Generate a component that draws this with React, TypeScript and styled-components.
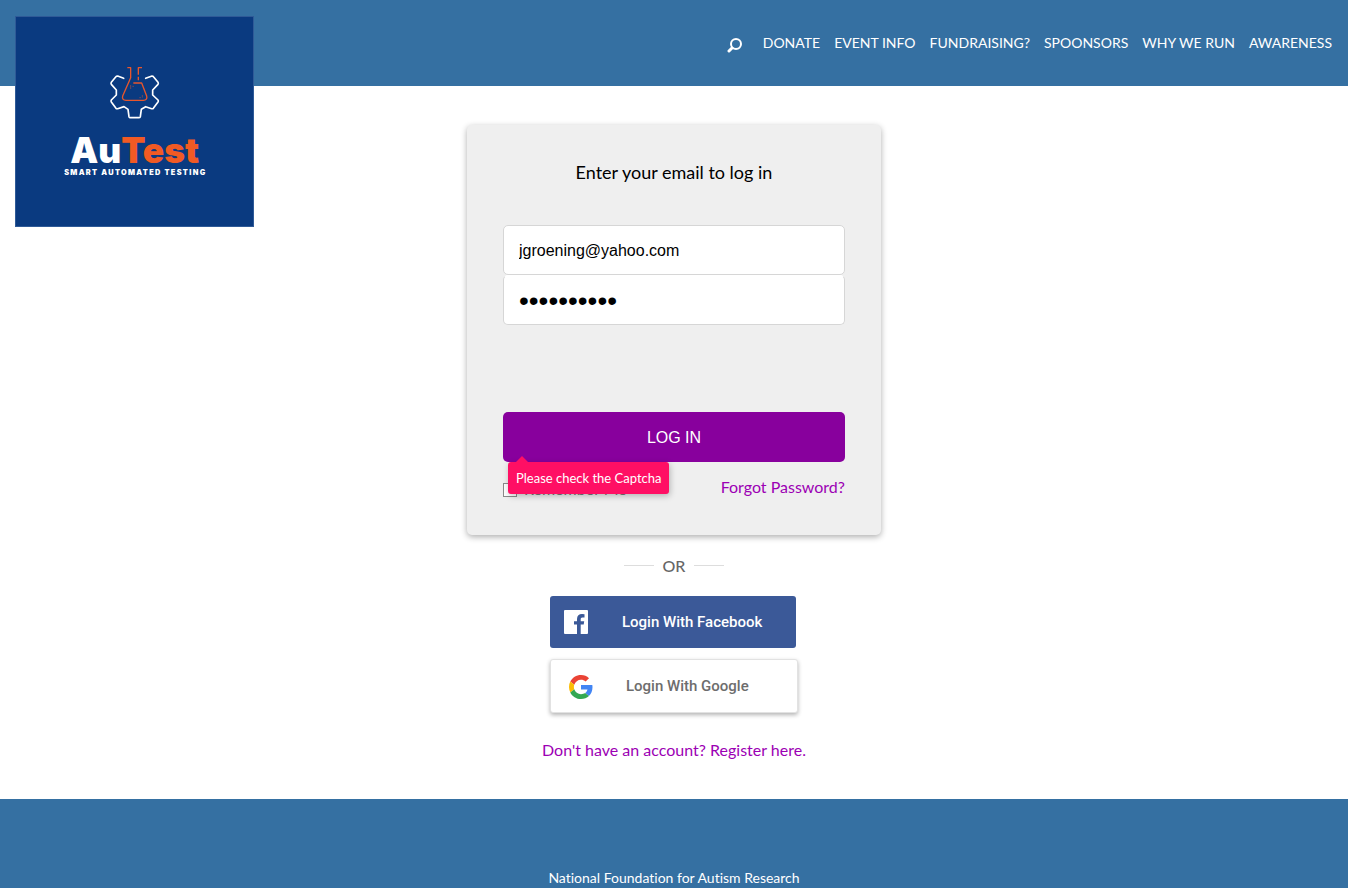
import React from "react";
import styled, { createGlobalStyle } from "styled-components";

const GlobalStyle = createGlobalStyle`
  *, *::before, *::after { box-sizing: border-box; }
  body {
    margin: 0;
    background: #fff;
    color: #000;
    font-family: Lato, "Liberation Sans", sans-serif;
    font-size: 16px;
    font-variant-ligatures: none;
  }
`;

const Page = styled.div`
  display: flex;
  flex-direction: column;
  min-height: 100vh;
  padding-right: 12px;
`;

const Header = styled.header`
  display: flex;
  justify-content: space-between;
  align-items: flex-start;
  height: 86px;
  padding: 16px 16px 0 15px;
  background: #3570a2;
`;

const LogoLink = styled.a`
  display: block;
  flex: none;
  width: 239px;
  height: 211px;
  background: #0a3a80;
  border: 1px solid #2f5a97;
`;

const LogoArt = styled.svg`
  display: block;
  width: 100%;
  height: 100%;
`;

const Nav = styled.nav`
  display: flex;
  align-items: center;
  gap: 14px;
  padding-top: 17px;
`;

const NavLink = styled.a`
  color: #fff;
  font-size: 14px;
  line-height: 20px;
  text-decoration: none;
  text-transform: uppercase;
`;

const SearchButton = styled.button`
  display: flex;
  margin: 0 6px 0 0;
  padding: 3px 0 0;
  border: 0;
  background: none;
  color: #fff;
  cursor: pointer;
`;

const Main = styled.main`
  display: flex;
  flex: 1;
  flex-direction: column;
  align-items: center;
  padding: 39px 16px 37px;
`;

const Card = styled.form`
  width: 414px;
  max-width: 100%;
  padding: 36px;
  border-radius: 5px;
  background: #efefef;
  box-shadow: 0 2px 6px rgba(0, 0, 0, 0.32);
`;

const Title = styled.h1`
  margin: 0 0 42px;
  font-size: 18px;
  font-weight: 400;
  line-height: 22px;
  text-align: center;
`;

const Field = styled.input`
  display: block;
  width: 100%;
  height: 50px;
  padding: 2px 15px 0;
  border: 1px solid #d6d6d6;
  border-radius: 5px;
  outline: 0;
  background: #fff;
  color: #000;
  font: 16px "Liberation Sans", Arial, sans-serif;

  & + & { border-top-color: #fff; }

  &[type="password"] { font-size: 28px; }
`;

const Submit = styled.button`
  display: block;
  width: 100%;
  height: 50px;
  padding: 2px 0 0;
  border: 0;
  border-radius: 5px;
  background: #88009d;
  color: #fff;
  font: 16px "Liberation Sans", Arial, sans-serif;
  cursor: pointer;
`;

const SubmitArea = styled.div`
  position: relative;
  margin-top: 87px;
`;

const Tooltip = styled.div`
  position: absolute;
  top: 100%;
  left: 5px;
  padding: 6px 8px;
  border-radius: 3px;
  background: #ff0f64;
  box-shadow: 1px 2px 6px rgba(0, 0, 0, 0.25);
  color: #fff;
  font-size: 13px;
  line-height: 20px;
  white-space: nowrap;

  &::before {
    content: "";
    position: absolute;
    bottom: 100%;
    left: 8px;
    border: 6px solid transparent;
    border-top-width: 0;
    border-bottom-color: #ff0f64;
  }
`;

const Options = styled.div`
  display: flex;
  justify-content: space-between;
  margin-top: 13px;
`;

const Remember = styled.label`
  display: flex;
  align-items: flex-end;
  gap: 7px;
  padding-bottom: 1px;
  color: #777;
  line-height: 18px;
`;

const Checkbox = styled.input`
  appearance: none;
  width: 14px;
  height: 14px;
  margin: 0 0 1px;
  border: 1px solid #8a8a8a;
  background: #fff;

  &:checked { background: #88009d; }
`;

const TextLink = styled.a`
  color: #9c00b4;
  line-height: 24px;
  text-decoration: none;
`;

const Divider = styled.div`
  display: flex;
  align-items: center;
  gap: 9px;
  margin: 20px 0;
  color: #666;
  font-weight: 500;
  line-height: 21px;

  &::before, &::after {
    content: "";
    width: 30px;
    height: 1px;
    background: #ddd;
  }
`;

const Social = styled.div`
  display: flex;
  flex-direction: column;
  gap: 11px;
  width: 248px;
  margin-bottom: 25px;
`;

const SocialButton = styled.button<{ $google?: boolean }>`
  display: flex;
  align-items: center;
  gap: ${(p) => (p.$google ? 33 : 34)}px;
  width: ${(p) => (p.$google ? 248 : 246)}px;
  height: ${(p) => (p.$google ? 54 : 52)}px;
  padding: 0 ${(p) => (p.$google ? 18 : 14)}px;
  border: ${(p) => (p.$google ? "1px solid #e2e2e2" : "0")};
  border-radius: 3px;
  background: ${(p) => (p.$google ? "#fff" : "#3b5998")};
  box-shadow: ${(p) => (p.$google ? "0 2px 4px rgba(0, 0, 0, 0.3)" : "none")};
  color: ${(p) => (p.$google ? "#6d6d6d" : "#fff")};
  font: 500 15px/20px Roboto, sans-serif;
  cursor: pointer;

  svg {
    flex: none;
    margin-top: ${(p) => (p.$google ? 2 : 0)}px;
  }
`;

const Footer = styled.footer`
  padding-top: 69px;
  background: #3570a2;
  color: #fff;
  font-size: 14px;
  line-height: 20px;
  text-align: center;
`;

const links = ["Donate", "Event Info", "Fundraising?", "Spoonsors", "Why We Run", "Awareness"];

function Logo() {
  return (
    <LogoArt viewBox="48 51 711 627" role="img" aria-label="AuTest">
      <g fill="none" strokeWidth="5" strokeLinejoin="round" strokeLinecap="round">
        <path
          stroke="#fff"
          d="M371 235 353 228Q349 228 347 231L334 247Q332 250 334 253L349 270V285L334 300Q332 303 334 306L348 325Q350 327 353 326L372 320 384 328 387 350Q388 353 391 353H416Q420 353 421 350L424 328 437 320 455 326Q458 327 460 325L474 306Q476 303 474 300L458 285V270L474 253Q476 250 474 247L461 231Q459 228 456 228L437 235"
        />
        <g stroke="#e8562c" strokeWidth="4" strokeLinecap="butt">
          <path d="M382 203H392V233L368 288Q365 300 378 301H430Q443 300 440 288L425 249H400" />
          <path d="M426 203H415V224M415 230V241" />
          <path d="M392 255V267M397 259H402M418 293H423M427 285V293" strokeWidth="2" opacity="0.7" />
        </g>
      </g>
      <text
        x="404"
        y="488"
        textAnchor="middle"
        fill="#fff"
        fontFamily="Inter, sans-serif"
        fontWeight="900"
        fontSize="106"
      >
        Au<tspan fill="#f15a24">Test</tspan>
      </text>
      <text
        x="406"
        y="526"
        textAnchor="middle"
        fill="#fff"
        fontFamily="Inter, sans-serif"
        fontWeight="900"
        fontSize="22"
        letterSpacing="4"
      >
        SMART AUTOMATED TESTING
      </text>
    </LogoArt>
  );
}

function SearchIcon() {
  return (
    <svg width="16" height="16" viewBox="0 0 16 16" fill="none" stroke="currentColor" aria-hidden="true">
      <circle cx="9" cy="7" r="5" strokeWidth="2" />
      <path d="M5 11 2 14" strokeWidth="3" strokeLinecap="round" />
    </svg>
  );
}

function FacebookIcon() {
  return (
    <svg width="24" height="24" viewBox="0 0 24 24" aria-hidden="true">
      <rect width="24" height="24" rx="1" fill="#fff" />
      <path
        fill="#3b5998"
        d="M13 24V14.500H10V11.300H13V9C13 5.700 15 4 18 4Q19.500 4 20.500 4.200V7.400H18.500C17 7.400 16.700 8.200 16.700 9.300V11.300H20.200L19.700 14.500H16.700V24Z"
      />
    </svg>
  );
}

function GoogleIcon() {
  return (
    <svg width="24" height="24" viewBox="0 0 48 48" aria-hidden="true">
      <path fill="#ea4335" d="M24 9.500c3.540 0 6.710 1.220 9.210 3.600l6.850-6.850C35.900 2.380 30.470 0 24 0 14.620 0 6.510 5.380 2.560 13.220l7.980 6.190C12.430 13.720 17.740 9.500 24 9.500z" />
      <path fill="#4285f4" d="M46.980 24.550c0-1.570-.150-3.090-.380-4.550H24v9.020h12.940c-.580 2.960-2.260 5.480-4.780 7.180l7.730 6c4.510-4.180 7.090-10.360 7.090-17.650z" />
      <path fill="#fbbc05" d="M10.530 28.590c-.480-1.450-.760-2.990-.760-4.590s.270-3.140.760-4.590l-7.980-6.190C.920 16.460 0 20.120 0 24c0 3.880.920 7.540 2.560 10.780l7.970-6.190z" />
      <path fill="#34a853" d="M24 48c6.480 0 11.930-2.130 15.890-5.810l-7.730-6c-2.150 1.450-4.920 2.300-8.160 2.300-6.260 0-11.570-4.220-13.470-9.910l-7.980 6.190C6.510 42.620 14.620 48 24 48z" />
    </svg>
  );
}

export default function App() {
  return (
    <Page>
      <GlobalStyle />
      <Header>
        <LogoLink href="#home">
          <Logo />
        </LogoLink>
        <Nav>
          <SearchButton type="button" aria-label="Search">
            <SearchIcon />
          </SearchButton>
          {links.map((label) => (
            <NavLink key={label} href="#">
              {label}
            </NavLink>
          ))}
        </Nav>
      </Header>

      <Main>
        <Card onSubmit={(e) => e.preventDefault()}>
          <Title>Enter your email to log in</Title>
          <Field type="email" aria-label="Email" defaultValue="jgroening@yahoo.com" />
          <Field type="password" aria-label="Password" defaultValue="abcdefghij" />
          <SubmitArea>
            <Submit type="submit">LOG IN</Submit>
            <Tooltip role="alert">Please check the Captcha</Tooltip>
          </SubmitArea>
          <Options>
            <Remember>
              <Checkbox type="checkbox" />
              Remember Me
            </Remember>
            <TextLink href="#forgot">Forgot Password?</TextLink>
          </Options>
        </Card>

        <Divider>OR</Divider>

        <Social>
          <SocialButton type="button">
            <FacebookIcon />
            Login With Facebook
          </SocialButton>
          <SocialButton type="button" $google>
            <GoogleIcon />
            Login With Google
          </SocialButton>
        </Social>

        <TextLink href="#register">Don't have an account? Register here.</TextLink>
      </Main>

      <Footer>National Foundation for Autism Research</Footer>
    </Page>
  );
}
